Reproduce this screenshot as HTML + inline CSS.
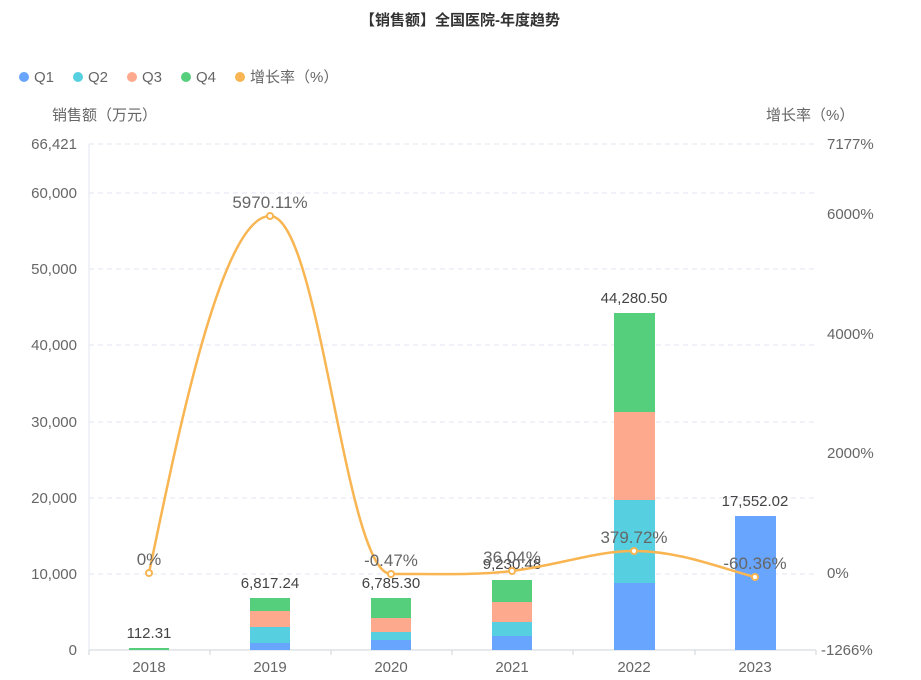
<!DOCTYPE html>
<html><head><meta charset="utf-8"><style>
body{margin:0;background:#fff;width:921px;height:680px;overflow:hidden}
svg{display:block;font-family:"Liberation Sans","Noto Sans CJK SC",sans-serif}
</style></head><body>
<svg width="921" height="680" viewBox="0 0 921 680">
<text x="460" y="25" font-size="15" font-weight="bold" fill="#333" text-anchor="middle">【销售额】全国医院-年度趋势</text>
<g font-size="15" fill="#666">
<circle cx="24" cy="77" r="5" fill="#68a5ff"/><text x="34" y="82">Q1</text>
<circle cx="78" cy="77" r="5" fill="#56d0e0"/><text x="88" y="82">Q2</text>
<circle cx="132" cy="77" r="5" fill="#fda98d"/><text x="142" y="82">Q3</text>
<circle cx="186" cy="77" r="5" fill="#56cf7d"/><text x="196" y="82">Q4</text>
<circle cx="240" cy="77" r="5" fill="#f8b552"/><text x="250" y="82">增长率（%）</text>
<text x="52" y="120">销售额（万元）</text>
<text x="766" y="120">增长率（%）</text>
</g>
<g stroke="#e0e6f1" stroke-dasharray="5,4">
<line x1="89" x2="816" y1="144" y2="144"/><line x1="89" x2="816" y1="193" y2="193"/>
<line x1="89" x2="816" y1="269" y2="269"/><line x1="89" x2="816" y1="345" y2="345"/>
<line x1="89" x2="816" y1="422" y2="422"/><line x1="89" x2="816" y1="498" y2="498"/>
<line x1="89" x2="816" y1="574" y2="574"/>
</g>
<line x1="89" y1="144" x2="89" y2="650" stroke="#e0e6f1"/>
<line x1="89" y1="650" x2="816" y2="650" stroke="#cdd6d8"/>
<g stroke="#cdd6d8"><line x1="89" x2="89" y1="650" y2="655"/><line x1="210" x2="210" y1="650" y2="655"/><line x1="331" x2="331" y1="650" y2="655"/><line x1="452" x2="452" y1="650" y2="655"/><line x1="573" x2="573" y1="650" y2="655"/><line x1="695" x2="695" y1="650" y2="655"/><line x1="816" x2="816" y1="650" y2="655"/></g>
<g font-size="15" fill="#666" text-anchor="end">
<text x="77" y="149">66,421</text><text x="77" y="198">60,000</text><text x="77" y="274">50,000</text>
<text x="77" y="350">40,000</text><text x="77" y="427">30,000</text><text x="77" y="503">20,000</text>
<text x="77" y="579">10,000</text><text x="77" y="655">0</text>
</g>
<g font-size="15" fill="#666">
<text x="827" y="149">7177%</text><text x="827" y="219">6000%</text><text x="827" y="339">4000%</text>
<text x="827" y="458">2000%</text><text x="827" y="578">0%</text><text x="821" y="655">-1266%</text>
</g>
<g font-size="15" fill="#666" text-anchor="middle">
<text x="149" y="672">2018</text><text x="270" y="672">2019</text><text x="391" y="672">2020</text>
<text x="512" y="672">2021</text><text x="634" y="672">2022</text><text x="755" y="672">2023</text>
</g>
<rect x="129" y="648" width="40" height="2" fill="#56cf7d"/>
<rect x="250" y="643" width="40" height="7" fill="#68a5ff"/><rect x="250" y="627" width="40" height="16" fill="#56d0e0"/><rect x="250" y="611" width="40" height="16" fill="#fda98d"/><rect x="250" y="598" width="40" height="13" fill="#56cf7d"/>
<rect x="371" y="640" width="40" height="10" fill="#68a5ff"/><rect x="371" y="632" width="40" height="8" fill="#56d0e0"/><rect x="371" y="618" width="40" height="14" fill="#fda98d"/><rect x="371" y="598" width="40" height="20" fill="#56cf7d"/>
<rect x="492" y="636" width="40" height="14" fill="#68a5ff"/><rect x="492" y="622" width="40" height="14" fill="#56d0e0"/><rect x="492" y="602" width="40" height="20" fill="#fda98d"/><rect x="492" y="580" width="40" height="22" fill="#56cf7d"/>
<rect x="614" y="583" width="41" height="67" fill="#68a5ff"/><rect x="614" y="500" width="41" height="83" fill="#56d0e0"/><rect x="614" y="412" width="41" height="88" fill="#fda98d"/><rect x="614" y="313" width="41" height="99" fill="#56cf7d"/>
<rect x="735" y="516" width="41" height="134" fill="#68a5ff"/>
<g font-size="15" fill="#444" text-anchor="middle">
<text x="149" y="638">112.31</text><text x="270" y="588">6,817.24</text><text x="391" y="588">6,785.30</text>
<text x="512" y="569">9,230.48</text><text x="634" y="303">44,280.50</text><text x="755" y="506">17,552.02</text>
</g>
<path d="M149,573 C175,450 220,216 270,216 C320,216 345,574 391,574 C440,574 480,575 512,571 C560,565 595,551 634,551 C680,551 720,568 755,577" fill="none" stroke="#f8b552" stroke-width="2.5"/>
<g fill="#fff" stroke="#f8b552" stroke-width="2"><circle cx="149" cy="573" r="3"/><circle cx="270" cy="216" r="3"/><circle cx="391" cy="574" r="3"/><circle cx="512" cy="571" r="3"/><circle cx="634" cy="551" r="3"/><circle cx="755" cy="577" r="3"/></g>
<g font-size="17" fill="#666" text-anchor="middle">
<text x="149" y="565">0%</text><text x="270" y="208">5970.11%</text><text x="391" y="566">-0.47%</text>
<text x="512" y="563">36.04%</text><text x="634" y="543">379.72%</text><text x="755" y="569">-60.36%</text>
</g>
</svg>
</body></html>
